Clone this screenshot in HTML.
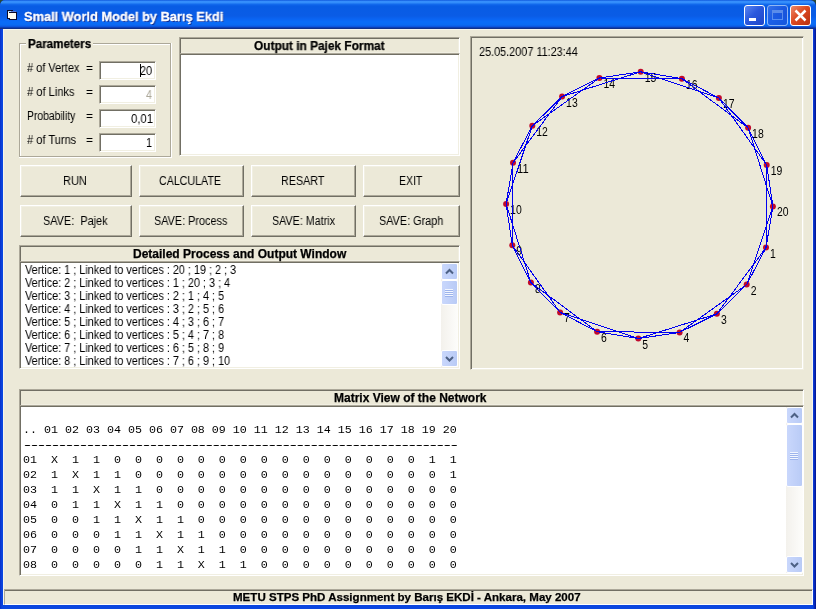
<!DOCTYPE html>
<html><head><meta charset="utf-8"><title>Small World Model by Barış Ekdi</title>
<style>
*{box-sizing:border-box;margin:0;padding:0}
html,body{width:816px;height:609px;overflow:hidden;background:#2a4a38;font-family:"Liberation Sans",sans-serif;font-size:11px;color:#000}
.abs{position:absolute}
.t{position:absolute;display:inline-block;white-space:nowrap;transform-origin:0 0;will-change:transform}
.b{-webkit-text-stroke:0.25px #000}
.ttl{text-shadow:1px 1px 0 #0f2a8f;-webkit-text-stroke:0.3px #fff}
#win{position:absolute;left:0;top:0;width:816px;height:609px;background:linear-gradient(to right,#0a2fc8 0,#0a46e0 2px,#0a46e0 813px,#0a2fc8 814px,#00138c 816px);overflow:hidden;border-radius:5px 6px 0 0}
#title{position:absolute;left:0;top:0;width:816px;height:29px;border-radius:5px 6px 0 0;
background:linear-gradient(to bottom,#0a4fd6 0px,#2f86f8 1px,#3c96ff 2px,#2a84f6 3px,#1168ec 4.5px,#085ce4 6px,#0a5ce6 16px,#0a64f2 19px,#0a6cf8 22px,#0a6af2 25px,#0c56e0 26.5px,#0c40b4 27.5px,#10308a 28.5px,#10308a 29px)}
#client{position:absolute;left:3px;top:29px;width:810px;height:576px;background:#ece9d8;border-left:1px solid #f7f5ec;border-top:1px solid #f7f5ec;border-right:1px solid #f7f5ec}
.tb{position:absolute;top:5px;width:21px;height:21px;border:1px solid #fff;border-radius:3px}
.tb.min,.tb.max{background:linear-gradient(135deg,#5b86f0 0%,#2a58dd 45%,#1f46c8 100%)}
.tb.max{opacity:.55}
.tb.cls{background:linear-gradient(135deg,#ee8a6b 0%,#dc4a22 45%,#b8300f 100%)}
.sunk{border:1px solid;border-color:#aca899 #f1efe2 #f1efe2 #aca899;box-shadow:inset 1px 1px 0 #716f64,inset -1px -1px 0 #fff}
.hdr{position:absolute;background:#ece9d8;border:1px solid;border-color:#aca899 #fff #fff #aca899;box-shadow:inset 1px 1px 0 #716f64,inset -1px -1px 0 #f1efe2}
.white{position:absolute;background:#fff;border:1px solid;border-color:#aca899 #fff #fff #aca899;box-shadow:inset 1px 1px 0 #716f64,inset -1px -1px 0 #f1efe2}
.btn{position:absolute;background:#ece9d8;border:1px solid;border-color:#fff #716f64 #716f64 #fff;box-shadow:inset -1px -1px 0 #aca899,inset 1px 1px 0 #f1efe2}
.inp{position:absolute;background:#fff;border:1px solid;border-color:#aca899 #fff #fff #aca899;box-shadow:inset 1px 1px 0 #716f64,inset -1px -1px 0 #f1efe2}
.graph{position:absolute;left:0;top:0;will-change:transform}
#matrix{will-change:transform;position:absolute;left:22.6px;top:408px;font-family:"Liberation Mono",monospace;font-size:11.667px;line-height:15px;white-space:pre}
.dash{text-shadow:1px 0 0 #000,2px 0 0 #000}
.sb{position:absolute;background:linear-gradient(to right,#f3f1ec,#fdfdfb)}
.sbb{position:absolute;left:0;width:17px;height:17px;border:1px solid #fff;border-radius:2px;background:linear-gradient(to right,#c9d7fc,#b9cbf6)}
.sbb svg{position:absolute;left:0;top:0}
.thumb{position:absolute;left:0;width:17px;border:1px solid #fff;border-radius:2px;background:linear-gradient(to right,#c9d7fc,#b9cbf6)}
.grip{position:absolute;left:3px;width:8px;height:8px;background:repeating-linear-gradient(to bottom,#f2f6ff 0,#f2f6ff 1px,#9db4ec 1px,#9db4ec 2px)}
</style></head><body>
<div id="win">
<div id="title">
 <svg class="abs" style="left:7px;top:10px" width="11" height="11" viewBox="0 0 11 11" shape-rendering="crispEdges"><rect x="0" y="0" width="6" height="1" fill="#0a0a2a"/><rect x="0" y="0" width="1" height="9" fill="#0a0a2a"/><rect x="1" y="1" width="8" height="8" fill="#fffdf2"/><rect x="1" y="1" width="3" height="1" fill="#a6d6ff"/><rect x="4" y="1" width="5" height="1" fill="#5a7ad0"/><rect x="2" y="2" width="8" height="1" fill="#0a0a2a"/><rect x="9" y="2" width="1" height="8" fill="#0a0a2a"/><rect x="2" y="9" width="8" height="1" fill="#0a0a2a"/><rect x="1" y="8" width="2" height="1" fill="#0a0a2a"/></svg>
 <span class="t ttl" style="left:23.70px;top:9.70px;font-size:13px;line-height:13px;font-weight:bold;color:#fff;transform:scaleX(0.9865);">Small World Model by Barış Ekdi</span>
 <div class="tb min" style="left:744px"><div class="abs" style="left:4px;top:12px;width:7px;height:3px;background:#fff"></div></div>
 <div class="tb max" style="left:767px"><div class="abs" style="left:4px;top:4px;width:11px;height:10px;border:1px solid #9db4ee;border-top-width:3px"></div></div>
 <div class="tb cls" style="left:790px"><svg class="abs" style="left:0;top:0" width="19" height="19"><path d="M4.5 4.5 L14.5 14.5 M14.5 4.5 L4.5 14.5" stroke="#fff" stroke-width="2.5" fill="none"/></svg></div>
</div>
<div id="client"></div>

<!-- Parameters group -->
<div class="abs" style="left:19px;top:43px;width:153px;height:115px;border:1px solid #fff"></div>
<div class="abs" style="left:19px;top:43px;width:152px;height:114px;border:1px solid #aca899;box-shadow:inset 1px 1px 0 #fff"></div>
<div class="abs" style="left:26px;top:38px;width:67px;height:12px;background:#ece9d8"></div>
<div class="inp" style="left:99px;top:61px;width:57px;height:19px"></div>
<div class="inp" style="left:99px;top:85px;width:57px;height:19px"></div>
<div class="inp" style="left:99px;top:109px;width:57px;height:19px"></div>
<div class="inp" style="left:99px;top:133px;width:57px;height:19px"></div>
<div class="abs" style="left:140px;top:64px;width:1px;height:13px;background:#000"></div>

<!-- Pajek output -->
<div class="hdr" style="left:179px;top:37px;width:281px;height:17px"></div>
<div class="white" style="left:179px;top:53px;width:281px;height:103px"></div>

<!-- Buttons -->
<div class="btn" style="left:20px;top:165px;width:112px;height:32px"></div>
<div class="btn" style="left:139px;top:165px;width:105px;height:32px"></div>
<div class="btn" style="left:251px;top:165px;width:105px;height:32px"></div>
<div class="btn" style="left:363px;top:165px;width:97px;height:32px"></div>
<div class="btn" style="left:20px;top:205px;width:112px;height:32px"></div>
<div class="btn" style="left:139px;top:205px;width:105px;height:32px"></div>
<div class="btn" style="left:251px;top:205px;width:105px;height:32px"></div>
<div class="btn" style="left:363px;top:205px;width:97px;height:32px"></div>

<!-- Detailed process -->
<div class="hdr" style="left:19px;top:245px;width:441px;height:17px"></div>
<div class="white" style="left:19px;top:261px;width:441px;height:108px"></div>
<div class="sb" style="left:441px;top:263px;width:17px;height:104px">
 <div class="sbb" style="top:0"><svg width="15" height="15"><path d="M4 9.5 L7.5 6 L11 9.5" stroke="#4d6185" stroke-width="2" fill="none"/></svg></div>
 <div class="thumb" style="top:17px;height:25px"><div class="grip" style="top:8px"></div></div>
 <div class="sbb" style="bottom:0"><svg width="15" height="15"><path d="M4 6 L7.5 9.5 L11 6" stroke="#4d6185" stroke-width="2" fill="none"/></svg></div>
</div>

<!-- Graph panel -->
<div class="abs sunk" style="left:470px;top:36px;width:334px;height:334px;background:#ece9d8"></div>
<svg class="graph" width="816" height="609" viewBox="0 0 816 609">
<g fill="#c00a2c"><circle cx="766.0" cy="247.6" r="3"/><circle cx="746.7" cy="284.6" r="3"/><circle cx="716.9" cy="313.8" r="3"/><circle cx="679.6" cy="332.4" r="3"/><circle cx="638.3" cy="338.6" r="3"/><circle cx="597.1" cy="331.7" r="3"/><circle cx="560.1" cy="312.4" r="3"/><circle cx="530.9" cy="282.6" r="3"/><circle cx="512.3" cy="245.3" r="3"/><circle cx="506.1" cy="204.0" r="3"/><circle cx="513.0" cy="162.8" r="3"/><circle cx="532.3" cy="125.8" r="3"/><circle cx="562.1" cy="96.6" r="3"/><circle cx="599.4" cy="78.0" r="3"/><circle cx="640.7" cy="71.8" r="3"/><circle cx="681.9" cy="78.7" r="3"/><circle cx="718.9" cy="98.0" r="3"/><circle cx="748.1" cy="127.8" r="3"/><circle cx="766.7" cy="165.1" r="3"/><circle cx="772.9" cy="206.4" r="3"/></g>
<g fill="#000" font-family="Liberation Sans, sans-serif" font-size="12px"><text x="770.0" y="257.6" textLength="5.8" lengthAdjust="spacingAndGlyphs">1</text><text x="750.7" y="294.6" textLength="5.8" lengthAdjust="spacingAndGlyphs">2</text><text x="720.9" y="323.8" textLength="5.8" lengthAdjust="spacingAndGlyphs">3</text><text x="683.6" y="342.4" textLength="5.8" lengthAdjust="spacingAndGlyphs">4</text><text x="642.3" y="348.6" textLength="5.8" lengthAdjust="spacingAndGlyphs">5</text><text x="601.1" y="341.7" textLength="5.8" lengthAdjust="spacingAndGlyphs">6</text><text x="564.1" y="322.4" textLength="5.8" lengthAdjust="spacingAndGlyphs">7</text><text x="534.9" y="292.6" textLength="5.8" lengthAdjust="spacingAndGlyphs">8</text><text x="516.3" y="255.3" textLength="5.8" lengthAdjust="spacingAndGlyphs">9</text><text x="510.1" y="214.0" textLength="11.6" lengthAdjust="spacingAndGlyphs">10</text><text x="517.0" y="172.8" textLength="11.6" lengthAdjust="spacingAndGlyphs">11</text><text x="536.3" y="135.8" textLength="11.6" lengthAdjust="spacingAndGlyphs">12</text><text x="566.1" y="106.6" textLength="11.6" lengthAdjust="spacingAndGlyphs">13</text><text x="603.4" y="88.0" textLength="11.6" lengthAdjust="spacingAndGlyphs">14</text><text x="644.7" y="81.8" textLength="11.6" lengthAdjust="spacingAndGlyphs">15</text><text x="685.9" y="88.7" textLength="11.6" lengthAdjust="spacingAndGlyphs">16</text><text x="722.9" y="108.0" textLength="11.6" lengthAdjust="spacingAndGlyphs">17</text><text x="752.1" y="137.8" textLength="11.6" lengthAdjust="spacingAndGlyphs">18</text><text x="770.7" y="175.1" textLength="11.6" lengthAdjust="spacingAndGlyphs">19</text><text x="776.9" y="216.4" textLength="11.6" lengthAdjust="spacingAndGlyphs">20</text></g>
<g stroke="#0000f0" stroke-width="1" fill="none" shape-rendering="crispEdges"><line x1="766.0" y1="247.6" x2="746.7" y2="284.6"/><line x1="766.0" y1="247.6" x2="716.9" y2="313.8"/><line x1="746.7" y1="284.6" x2="716.9" y2="313.8"/><line x1="746.7" y1="284.6" x2="679.6" y2="332.4"/><line x1="716.9" y1="313.8" x2="679.6" y2="332.4"/><line x1="716.9" y1="313.8" x2="638.3" y2="338.6"/><line x1="679.6" y1="332.4" x2="638.3" y2="338.6"/><line x1="679.6" y1="332.4" x2="597.1" y2="331.7"/><line x1="638.3" y1="338.6" x2="597.1" y2="331.7"/><line x1="638.3" y1="338.6" x2="560.1" y2="312.4"/><line x1="597.1" y1="331.7" x2="560.1" y2="312.4"/><line x1="597.1" y1="331.7" x2="530.9" y2="282.6"/><line x1="560.1" y1="312.4" x2="530.9" y2="282.6"/><line x1="560.1" y1="312.4" x2="512.3" y2="245.3"/><line x1="530.9" y1="282.6" x2="512.3" y2="245.3"/><line x1="530.9" y1="282.6" x2="506.1" y2="204.0"/><line x1="512.3" y1="245.3" x2="506.1" y2="204.0"/><line x1="512.3" y1="245.3" x2="513.0" y2="162.8"/><line x1="506.1" y1="204.0" x2="513.0" y2="162.8"/><line x1="506.1" y1="204.0" x2="532.3" y2="125.8"/><line x1="513.0" y1="162.8" x2="532.3" y2="125.8"/><line x1="513.0" y1="162.8" x2="562.1" y2="96.6"/><line x1="532.3" y1="125.8" x2="562.1" y2="96.6"/><line x1="532.3" y1="125.8" x2="599.4" y2="78.0"/><line x1="562.1" y1="96.6" x2="599.4" y2="78.0"/><line x1="562.1" y1="96.6" x2="640.7" y2="71.8"/><line x1="599.4" y1="78.0" x2="640.7" y2="71.8"/><line x1="599.4" y1="78.0" x2="681.9" y2="78.7"/><line x1="640.7" y1="71.8" x2="681.9" y2="78.7"/><line x1="640.7" y1="71.8" x2="718.9" y2="98.0"/><line x1="681.9" y1="78.7" x2="718.9" y2="98.0"/><line x1="681.9" y1="78.7" x2="748.1" y2="127.8"/><line x1="718.9" y1="98.0" x2="748.1" y2="127.8"/><line x1="718.9" y1="98.0" x2="766.7" y2="165.1"/><line x1="748.1" y1="127.8" x2="766.7" y2="165.1"/><line x1="748.1" y1="127.8" x2="772.9" y2="206.4"/><line x1="766.7" y1="165.1" x2="772.9" y2="206.4"/><line x1="766.7" y1="165.1" x2="766.0" y2="247.6"/><line x1="772.9" y1="206.4" x2="766.0" y2="247.6"/><line x1="772.9" y1="206.4" x2="746.7" y2="284.6"/></g>
</svg>

<!-- Matrix -->
<div class="hdr" style="left:19px;top:389px;width:785px;height:17px"></div>
<div class="white" style="left:19px;top:405px;width:785px;height:171px"></div>
<div id="matrix">
.. 01 02 03 04 05 06 07 08 09 10 11 12 13 14 15 16 17 18 19 20
<span class="dash">--------------------------------------------------------------</span>
01  X  1  1  0  0  0  0  0  0  0  0  0  0  0  0  0  0  0  1  1
02  1  X  1  1  0  0  0  0  0  0  0  0  0  0  0  0  0  0  0  1
03  1  1  X  1  1  0  0  0  0  0  0  0  0  0  0  0  0  0  0  0
04  0  1  1  X  1  1  0  0  0  0  0  0  0  0  0  0  0  0  0  0
05  0  0  1  1  X  1  1  0  0  0  0  0  0  0  0  0  0  0  0  0
06  0  0  0  1  1  X  1  1  0  0  0  0  0  0  0  0  0  0  0  0
07  0  0  0  0  1  1  X  1  1  0  0  0  0  0  0  0  0  0  0  0
08  0  0  0  0  0  1  1  X  1  1  0  0  0  0  0  0  0  0  0  0</div>
<div class="sb" style="left:786px;top:407px;width:17px;height:166px">
 <div class="sbb" style="top:0"><svg width="15" height="15"><path d="M4 9.5 L7.5 6 L11 9.5" stroke="#4d6185" stroke-width="2" fill="none"/></svg></div>
 <div class="thumb" style="top:17px;height:63px"><div class="grip" style="top:27px"></div></div>
 <div class="sbb" style="bottom:0"><svg width="15" height="15"><path d="M4 6 L7.5 9.5 L11 6" stroke="#4d6185" stroke-width="2" fill="none"/></svg></div>
</div>

<!-- Status -->
<div class="abs" style="left:4px;top:589px;width:809px;height:16px;background:#ece9d8;border:1px solid;border-color:#aca899 #fff #fff #aca899;box-shadow:inset 0 1px 0 #716f64"></div>

<span class="t b" style="left:28.10px;top:37.63px;font-size:12px;line-height:12px;font-weight:bold;transform:scaleX(0.9667);">Parameters</span>
<span class="t " style="left:27.10px;top:61.73px;font-size:12px;line-height:12px;transform:scaleX(0.9151);"># of Vertex</span>
<span class="t " style="left:85.60px;top:61.73px;font-size:12px;line-height:12px;">=</span>
<span class="t " style="left:27.10px;top:85.73px;font-size:12px;line-height:12px;transform:scaleX(0.9267);"># of Links</span>
<span class="t " style="left:85.60px;top:85.73px;font-size:12px;line-height:12px;">=</span>
<span class="t " style="left:27.10px;top:109.73px;font-size:12px;line-height:12px;transform:scaleX(0.8621);">Probability</span>
<span class="t " style="left:85.60px;top:109.73px;font-size:12px;line-height:12px;">=</span>
<span class="t " style="left:27.10px;top:133.73px;font-size:12px;line-height:12px;transform:scaleX(0.9220);"># of Turns</span>
<span class="t " style="left:85.60px;top:133.73px;font-size:12px;line-height:12px;">=</span>
<span class="t " style="left:140.41px;top:64.83px;font-size:12px;line-height:12px;transform:scaleX(0.8983);">20</span>
<span class="t " style="left:146.40px;top:88.83px;font-size:12px;line-height:12px;color:#aca899;transform:scaleX(0.8983);">4</span>
<span class="t " style="left:130.82px;top:112.83px;font-size:12px;line-height:12px;transform:scaleX(0.9411);">0,01</span>
<span class="t " style="left:146.40px;top:136.83px;font-size:12px;line-height:12px;transform:scaleX(0.8983);">1</span>
<span class="t b" style="left:253.70px;top:39.83px;font-size:12px;line-height:12px;font-weight:bold;transform:scaleX(0.9893);">Output in Pajek Format</span>
<span class="t " style="left:63.10px;top:174.73px;font-size:12px;line-height:12px;transform:scaleX(0.9193);">RUN</span>
<span class="t " style="left:159.40px;top:174.73px;font-size:12px;line-height:12px;transform:scaleX(0.8883);">CALCULATE</span>
<span class="t " style="left:281.10px;top:174.73px;font-size:12px;line-height:12px;transform:scaleX(0.8936);">RESART</span>
<span class="t " style="left:398.70px;top:174.73px;font-size:12px;line-height:12px;transform:scaleX(0.8773);">EXIT</span>
<span class="t " style="left:42.80px;top:214.73px;font-size:12px;line-height:12px;transform:scaleX(0.9066);">SAVE: &nbsp;Pajek</span>
<span class="t " style="left:154.40px;top:214.73px;font-size:12px;line-height:12px;transform:scaleX(0.9034);">SAVE: Process</span>
<span class="t " style="left:271.70px;top:214.73px;font-size:12px;line-height:12px;transform:scaleX(0.8941);">SAVE: Matrix</span>
<span class="t " style="left:379.40px;top:214.73px;font-size:12px;line-height:12px;transform:scaleX(0.9038);">SAVE: Graph</span>
<span class="t b" style="left:132.60px;top:247.73px;font-size:12px;line-height:12px;font-weight:bold;">Detailed Process and Output Window</span>
<span class="t " style="left:25.40px;top:263.63px;font-size:12px;line-height:12px;transform:scaleX(0.9045);">Vertice: 1 ; Linked to vertices : 20 ; 19 ; 2 ; 3</span>
<span class="t " style="left:25.40px;top:276.63px;font-size:12px;line-height:12px;transform:scaleX(0.9046);">Vertice: 2 ; Linked to vertices : 1 ; 20 ; 3 ; 4</span>
<span class="t " style="left:25.40px;top:289.63px;font-size:12px;line-height:12px;transform:scaleX(0.9047);">Vertice: 3 ; Linked to vertices : 2 ; 1 ; 4 ; 5</span>
<span class="t " style="left:25.40px;top:302.63px;font-size:12px;line-height:12px;transform:scaleX(0.9047);">Vertice: 4 ; Linked to vertices : 3 ; 2 ; 5 ; 6</span>
<span class="t " style="left:25.40px;top:315.63px;font-size:12px;line-height:12px;transform:scaleX(0.9047);">Vertice: 5 ; Linked to vertices : 4 ; 3 ; 6 ; 7</span>
<span class="t " style="left:25.40px;top:328.63px;font-size:12px;line-height:12px;transform:scaleX(0.9047);">Vertice: 6 ; Linked to vertices : 5 ; 4 ; 7 ; 8</span>
<span class="t " style="left:25.40px;top:341.63px;font-size:12px;line-height:12px;transform:scaleX(0.9047);">Vertice: 7 ; Linked to vertices : 6 ; 5 ; 8 ; 9</span>
<span class="t " style="left:25.40px;top:354.63px;font-size:12px;line-height:12px;transform:scaleX(0.9046);">Vertice: 8 ; Linked to vertices : 7 ; 6 ; 9 ; 10</span>
<span class="t " style="left:479.20px;top:45.63px;font-size:12px;line-height:12px;transform:scaleX(0.9047);">25.05.2007 11:23:44</span>
<span class="t b" style="left:334.40px;top:391.73px;font-size:12px;line-height:12px;font-weight:bold;">Matrix View of the Network</span>
<span class="t b" style="left:232.90px;top:592.13px;font-size:11.4px;line-height:11.4px;font-weight:bold;transform:scaleX(1.0139);">METU STPS PhD Assignment by Barış EKDİ - Ankara, May 2007</span>
</div>
</body></html>
